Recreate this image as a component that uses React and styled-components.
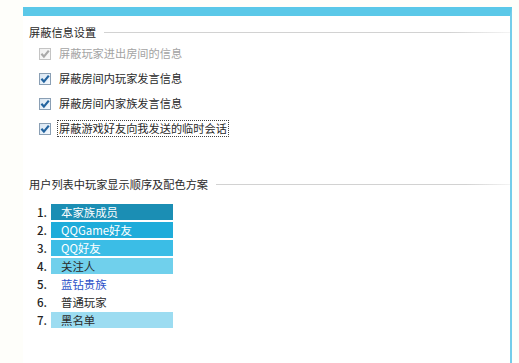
import styled, { createGlobalStyle } from 'styled-components';

const GlobalStyle = createGlobalStyle`
  html, body {
    margin: 0;
    padding: 0;
    background: #fefefa;
  }
  body {
    font-family: "Noto Sans CJK SC", "Microsoft YaHei", sans-serif;
    font-size: 11.2px;
    color: #2a2a2a;
  }
`;

const Page = styled.div`
  width: 519px;
  height: 363px;
  padding: 7px 0 0 23px;
  box-sizing: border-box;
  overflow: hidden;
`;

const Panel = styled.div`
  width: 489px;
  height: 356px;
  box-sizing: border-box;
  background: #fff;
  border-top: 9px solid #5bc8e8;
  border-right: 2px solid #74cdea;
  padding: 8px 0 0 6px;
`;

const TitleRow = styled.div`
  display: flex;
  align-items: center;
  height: 16px;
  margin-top: ${p => p.$top || 0}px;
  gap: 8px;
`;

const Title = styled.span`
  white-space: nowrap;
  line-height: 16px;
`;

const Rule = styled.div`
  flex: 1;
  height: 1px;
  background: linear-gradient(to right, #d2d2d2 85%, #f4f4f4);
`;

const Options = styled.div`
  display: flex;
  flex-direction: column;
  margin-top: 1px;
  padding-left: 10px;
`;

const OptionRow = styled.label`
  display: flex;
  align-items: center;
  height: 25px;
  gap: 6px;
  color: ${p => (p.$disabled ? '#a3a3a3' : '#2a2a2a')};
`;

const OptionText = styled.span`
  line-height: 15px;
  padding: 0 1px;
  border: 1px ${p => (p.$focus ? 'dotted #444' : 'solid transparent')};
`;

const List = styled.ol`
  list-style: none;
  margin: 12px 0 0;
  padding: 0 0 0 8px;
  display: flex;
  flex-direction: column;
  gap: 2px;
`;

const Item = styled.li`
  display: flex;
  align-items: center;
  height: 16px;
`;

const Num = styled.span`
  width: 14px;
  font-size: 11.5px;
  font-weight: 500;
  color: #222;
`;

const Bar = styled.span`
  width: 112px;
  height: 16px;
  line-height: 16px;
  padding-left: 10px;
  background: ${p => p.$bg || 'transparent'};
  color: ${p => p.$fg || '#2a2a2a'};
  font-size: 11.4px;
`;

const CheckBox = ({ disabled }) => (
  <svg width="12" height="12" viewBox="0 0 12 12">
    <defs>
      <linearGradient id={disabled ? 'cbg-d' : 'cbg'} x1="0" y1="0" x2="1" y2="1">
        <stop offset="0" stopColor={disabled ? '#f0f0f0' : '#d6e4f1'} />
        <stop offset="1" stopColor={disabled ? '#fafafa' : '#f6faff'} />
      </linearGradient>
    </defs>
    <rect x="0.5" y="0.5" width="11" height="11" fill={`url(#${disabled ? 'cbg-d' : 'cbg'})`}
      stroke={disabled ? '#c4c4c4' : '#8a9fb4'} />
    <path d="M2.4 5.8 L4.9 8.6 L9.8 2.6" fill="none"
      stroke={disabled ? '#a9a9a9' : '#22639f'} strokeWidth="2.2" strokeLinejoin="miter" />
  </svg>
);

const options = [
  { text: '屏蔽玩家进出房间的信息', disabled: true },
  { text: '屏蔽房间内玩家发言信息' },
  { text: '屏蔽房间内家族发言信息' },
  { text: '屏蔽游戏好友向我发送的临时会话', focus: true },
];

const ranks = [
  { text: '本家族成员', bg: '#1b8eb4', fg: '#fff' },
  { text: 'QQGame好友', bg: '#1facda', fg: '#fff' },
  { text: 'QQ好友', bg: '#3bbde6', fg: '#fff' },
  { text: '关注人', bg: '#70d0ec' },
  { text: '蓝钻贵族', fg: '#2c4fc8' },
  { text: '普通玩家' },
  { text: '黑名单', bg: '#9cdcf1' },
];

const App = () => (
  <Page>
    <GlobalStyle />
    <Panel>
      <TitleRow>
        <Title>屏蔽信息设置</Title>
        <Rule />
      </TitleRow>
      <Options>
        {options.map(o => (
          <OptionRow key={o.text} $disabled={o.disabled}>
            <CheckBox disabled={o.disabled} />
            <OptionText $focus={o.focus}>{o.text}</OptionText>
          </OptionRow>
        ))}
      </Options>
      <TitleRow $top={35}>
        <Title>用户列表中玩家显示顺序及配色方案</Title>
        <Rule />
      </TitleRow>
      <List>
        {ranks.map((r, i) => (
          <Item key={r.text}>
            <Num>{i + 1}.</Num>
            <Bar $bg={r.bg} $fg={r.fg}>{r.text}</Bar>
          </Item>
        ))}
      </List>
    </Panel>
  </Page>
);

export default App;
